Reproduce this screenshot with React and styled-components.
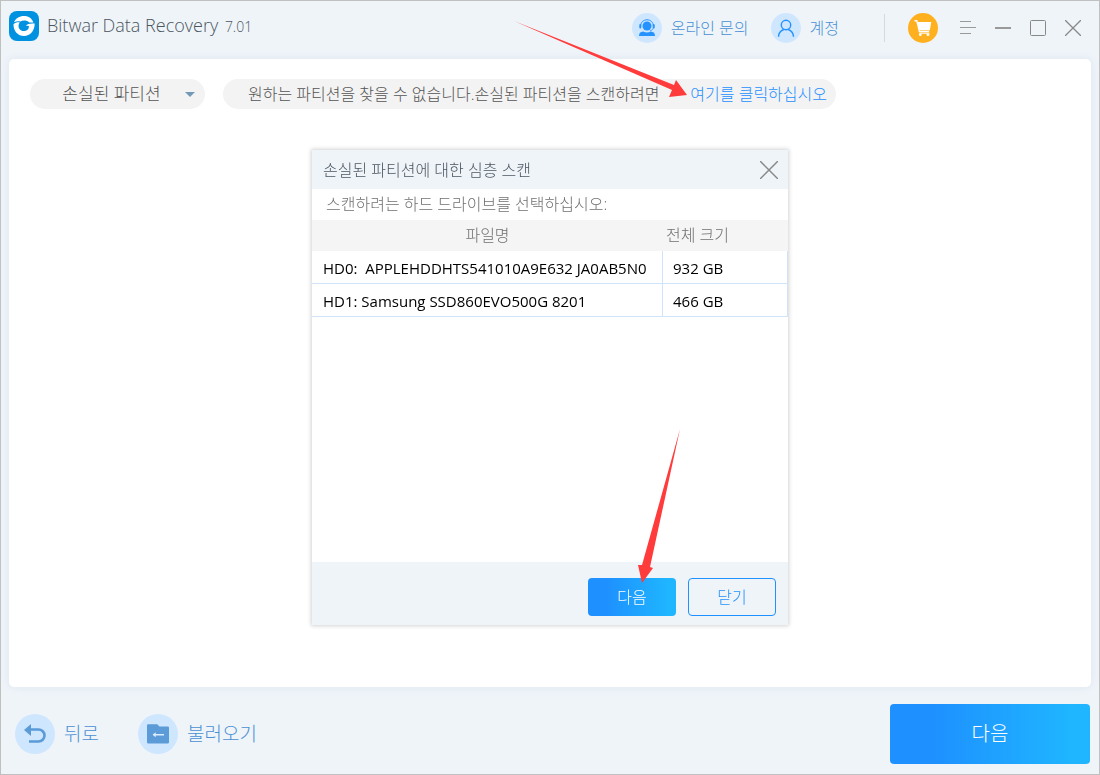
import React, { useState } from 'react';
import styled, { createGlobalStyle } from 'styled-components';

const GlobalStyle = createGlobalStyle`
  * {
    box-sizing: border-box;
  }

  body {
    margin: 0;
    background-color: #eff4f9;
    font-family: 'Open Sans', 'Noto Sans CJK KR', sans-serif;
    font-size: 16px;
    line-height: 24px;
    color: #555;
  }

  button,
  select {
    margin: 0;
    padding: 0;
    border: none;
    background: none;
    font: inherit;
    color: inherit;
    cursor: pointer;
  }
`;

const Window = styled.div`
  position: relative;
  display: flex;
  flex-direction: column;
  min-height: 100vh;
  border: 1px solid #c0c0c0;
  background-color: #eff4f9;
`;

const Header = styled.header`
  display: flex;
  align-items: center;
  justify-content: space-between;
  height: 54px;
  padding: 0 18px 0 8px;
`;

const Brand = styled.div`
  display: flex;
  align-items: center;
  gap: 8px;
  padding-bottom: 4px;
`;

const Title = styled.h1`
  margin: 0;
  font-size: 18px;
  font-weight: 300;
  color: #4c5660;
`;

const Version = styled.span`
  margin-left: 2px;
  font-size: 14px;
`;

const HeaderActions = styled.div`
  display: flex;
  align-items: center;
`;

const HeaderButton = styled.button`
  display: flex;
  align-items: center;
  gap: 9px;
  margin-right: 22px;
  font-weight: 300;
  color: #4a90d4;
`;

const Circle = styled.span`
  display: flex;
  align-items: center;
  justify-content: center;
  width: ${props => props.$size || 30}px;
  height: ${props => props.$size || 30}px;
  border-radius: 50%;
  background-color: ${props => props.$color || '#cfe6ff'};
`;

const Divider = styled.span`
  width: 1px;
  height: 28px;
  margin: 0 23px;
  background-color: #d6dade;
`;

const WindowControls = styled.div`
  display: flex;
  align-items: center;
  gap: 19px;
  margin-left: 22px;
`;

const IconButton = styled.button`
  display: flex;
  align-items: center;
`;

const Panel = styled.main`
  flex: 1;
  margin: 4px 8px 0;
  padding: 20px 21px;
  border-radius: 5px;
  background-color: #fff;
  box-shadow: 0 0 8px #dce5ed;
`;

const FilterRow = styled.div`
  display: flex;
  align-items: center;
  gap: 18px;
`;

const SelectBox = styled.div`
  position: relative;
  width: 175px;
`;

const PartitionSelect = styled.select`
  appearance: none;
  width: 100%;
  height: 30px;
  padding: 0 24px 0 12px;
  border-radius: 15px;
  background-color: #f3f3f3;
  font-size: 17px;
  font-weight: 300;
  text-align: center;
  text-align-last: center;
`;

const Caret = styled.span`
  position: absolute;
  top: 13px;
  right: 10px;
  border: 5px solid transparent;
  border-top-color: #7399b8;
  border-bottom: none;
  pointer-events: none;
`;

const Hint = styled.p`
  display: flex;
  align-items: center;
  justify-content: space-between;
  width: 613px;
  min-height: 30px;
  margin: 0;
  padding: 0 9px 0 25px;
  border-radius: 15px;
  background-color: #f3f3f3;
  font-weight: 300;
`;

const HintLink = styled.a`
  position: relative;
  padding-left: 3px;
  color: #1e90ff;
  text-decoration: none;
`;

const LinkPointer = styled.svg`
  position: absolute;
  right: 100%;
  bottom: 8px;
  pointer-events: none;
`;

const Footer = styled.footer`
  display: flex;
  align-items: center;
  justify-content: space-between;
  padding: 17px 9px 10px 14px;
`;

const FooterActions = styled.div`
  display: flex;
  gap: 39px;
`;

const FooterButton = styled.button`
  display: flex;
  align-items: center;
  gap: 9px;
  font-size: 19px;
  font-weight: 300;
  color: #4a90d4;
`;

const PrimaryButton = styled.button`
  position: relative;
  width: ${props => (props.$large ? 200 : 88)}px;
  height: ${props => (props.$large ? 60 : 38)}px;
  border-radius: 4px;
  background: linear-gradient(to right, #1e90ff 20%, #1fb5ff 90%);
  font-size: ${props => (props.$large ? 20 : 16)}px;
  font-weight: 300;
  color: #fff;
`;

const OutlineButton = styled.button`
  width: 88px;
  height: 38px;
  border: 1px solid #1e90ff;
  border-radius: 4px;
  font-weight: 300;
  color: #1e90ff;
`;

const DialogLayer = styled.div`
  position: fixed;
  inset: 0;
  display: flex;
  align-items: center;
  justify-content: center;
  pointer-events: none;
`;

const Dialog = styled.section`
  width: 476px;
  background-color: #fff;
  box-shadow: 0 0 4px 1px #d4d4d4;
  pointer-events: auto;
`;

const DialogHeader = styled.div`
  display: flex;
  align-items: center;
  justify-content: space-between;
  height: 39px;
  padding: 0 10px 0 11px;
  background-color: #eff4f9;
`;

const DialogTitle = styled.h2`
  margin: 0;
  font-size: 16px;
  font-weight: 300;
  color: #4c5660;
`;

const DialogText = styled.p`
  height: 31px;
  margin: 0;
  padding: 3px 14px;
  font-weight: 300;
  color: #707070;
`;

const TableArea = styled.div`
  min-height: 342px;
`;

const DriveTable = styled.table`
  width: 100%;
  border-collapse: separate;
  border-spacing: 0;
  table-layout: fixed;
`;

const HeadCell = styled.th`
  width: ${props => props.$width || 'auto'};
  height: 31px;
  padding: 0 3px 2px;
  background-color: #f5f5f5;
  font-weight: 300;
  text-align: ${props => props.$align || 'left'};
  color: #707070;
`;

const Cell = styled.td`
  height: 33px;
  padding: 2px 10px 0;
  border-right: 1px solid #cfe4fa;
  border-bottom: 1px solid #cfe4fa;
  font-size: 15px;
  line-height: 20px;
  color: #000;
  white-space: pre;

  &:first-child {
    padding-left: 11px;
  }
`;

const DialogFooter = styled.div`
  display: flex;
  align-items: center;
  justify-content: flex-end;
  gap: 12px;
  padding: 16px 12px 9px;
  background-color: #eff4f9;
`;

const ButtonPointer = styled.svg`
  position: absolute;
  bottom: 33px;
  left: 49px;
  pointer-events: none;
`;

const drives = [
  { name: 'HD0:  APPLEHDDHTS541010A9E632 JA0AB5N0', size: '932 GB' },
  { name: 'HD1: Samsung SSD860EVO500G 8201', size: '466 GB' },
];

const Logo = () => (
  <svg width="30" height="30" viewBox="0 0 30 30">
    <rect width="30" height="30" rx="8" fill="#0092e0" />
    <path
      d="M5 11.300C6.500 7.300 10.300 5 15 5c4.700 0 8.200 2.600 9.500 6.600-1.700-.3-3.100-.3-4.300 0C19 10.200 17.200 9.600 15 9.600c-1.400 0-2.500.3-3.500.9-2.300-.6-4.500-.3-6.500.8z"
      fill="#fff"
    />
    <path
      d="M4.500 13.200C6.400 11.500 8.600 11 10.700 11.400c-1.400 2-1.600 4.400-.4 6.300 2 3 6.800 3 8.900.2.600-.9.800-1.900.7-3l-3.200-.3c2-1.900 5-2.600 9-2C25.700 19.900 21.200 25 15 25 8.900 25 4.400 20 4.500 13.200z"
      fill="#fff"
    />
  </svg>
);

const SupportIcon = () => (
  <svg width="18" height="18" viewBox="0 0 18 18">
    <path d="M2.500 7C3 3 5.500.8 9 .8s6 2.200 6.500 6.200" fill="none" stroke="#2492ff" strokeWidth="1" />
    <circle cx="9" cy="7" r="4.500" fill="#2492ff" />
    <rect x="1.300" y="5" width="2" height="4.500" rx="1" fill="#2492ff" />
    <rect x="14.700" y="5" width="2" height="4.500" rx="1" fill="#2492ff" />
    <path d="M15.300 9c-.5 1.800-2 2.600-3.500 2.900" fill="none" stroke="#2492ff" strokeWidth="0.800" />
    <path d="M1 17c0-3 1.200-4.300 4.300-4.600 2 1.500 5.400 1.500 7.400 0 3.100.3 4.300 1.600 4.300 4.600z" fill="#2492ff" />
  </svg>
);

const UserIcon = () => (
  <svg width="18" height="18" viewBox="0 0 18 18" fill="none" stroke="#2492ff" strokeWidth="1.400">
    <circle cx="9" cy="6" r="4.700" />
    <path d="M1.500 17.700c.2-4 2.500-6.200 5.300-7.200M16.500 17.700c-.2-4-2.500-6.200-5.300-7.200" />
  </svg>
);

const CartIcon = () => (
  <svg width="18" height="18" viewBox="0 0 18 18">
    <path d="M.5 1.700h2.300l2.600 10.800h9.800" fill="none" stroke="#fff" strokeWidth="1.400" />
    <path d="M3.300 3h13.900l-1.300 8.300H5.300z" fill="#fff" />
    <path d="M5.300 14.200h10" stroke="#fff" strokeWidth="1" />
    <circle cx="6.300" cy="15.700" r="1.400" fill="#fff" />
    <circle cx="14" cy="15.700" r="1.400" fill="#fff" />
  </svg>
);

const MenuIcon = () => (
  <svg width="16" height="16" viewBox="0 0 16 16" stroke="#999" strokeWidth="1">
    <path d="M0 1.500h11M0 7.500h16M0 13.500h11" />
  </svg>
);

const MinimizeIcon = () => (
  <svg width="16" height="16" viewBox="0 0 16 16">
    <path d="M0 8h16" stroke="#999" strokeWidth="2" />
  </svg>
);

const MaximizeIcon = () => (
  <svg width="16" height="16" viewBox="0 0 16 16">
    <rect x="0.500" y="0.500" width="15" height="15" rx="1" fill="none" stroke="#888" />
  </svg>
);

const CloseIcon = ({ size = 16 }) => (
  <svg width={size} height={size} viewBox="0 0 16 16">
    <path d="M0 0l16 16M16 0L0 16" stroke="#888" strokeWidth="1.300" />
  </svg>
);

const BackIcon = () => (
  <svg width="22" height="20" viewBox="0 0 22 20">
    <path d="M0 6l7-6v12z" fill="#5a9bd8" />
    <path d="M5 5.500h9.500a5.800 5.800 0 0 1 0 12H5" fill="none" stroke="#5a9bd8" strokeWidth="2.600" />
  </svg>
);

const FolderIcon = () => (
  <svg width="22" height="20" viewBox="0 0 22 20">
    <path d="M0 1.500A1.200 1.200 0 0 1 1.200.3h9L12.500 2.500h8.300A1.200 1.200 0 0 1 22 3.700v14.600a1.200 1.200 0 0 1-1.200 1.200H1.200A1.200 1.200 0 0 1 0 18.300z" fill="#5a9bd8" />
    <path d="M5.500 10.700L8.700 8.200v1.800h8.300v1.400H8.700v1.800z" fill="#dcedff" />
  </svg>
);

function App() {
  const [partition, setPartition] = useState('lost');
  const [dialogOpen, setDialogOpen] = useState(true);

  return (
    <Window>
      <GlobalStyle />
      <Header>
        <Brand>
          <Logo />
          <Title>
            Bitwar Data Recovery <Version>7.01</Version>
          </Title>
        </Brand>
        <HeaderActions>
          <HeaderButton type="button">
            <Circle><SupportIcon /></Circle>
            온라인 문의
          </HeaderButton>
          <HeaderButton type="button">
            <Circle><UserIcon /></Circle>
            계정
          </HeaderButton>
          <Divider />
          <IconButton type="button" aria-label="구매">
            <Circle $color="#ffb01f"><CartIcon /></Circle>
          </IconButton>
          <WindowControls>
            <IconButton type="button" aria-label="메뉴"><MenuIcon /></IconButton>
            <IconButton type="button" aria-label="최소화"><MinimizeIcon /></IconButton>
            <IconButton type="button" aria-label="최대화"><MaximizeIcon /></IconButton>
            <IconButton type="button" aria-label="창 닫기"><CloseIcon /></IconButton>
          </WindowControls>
        </HeaderActions>
      </Header>

      <Panel>
        <FilterRow>
          <SelectBox>
            <PartitionSelect
              aria-label="파티션"
              value={partition}
              onChange={e => setPartition(e.target.value)}
            >
              <option value="lost">손실된 파티션</option>
            </PartitionSelect>
            <Caret />
          </SelectBox>
          <Hint>
            <span>원하는 파티션을 찾을 수 없습니다.손실된 파티션을 스캔하려면</span>
            <HintLink href="#scan" onClick={() => setDialogOpen(true)}>
              여기를 클릭하십시오
              <LinkPointer width="173" height="77" viewBox="0 0 173 77">
                <path d="M0 0L160 64L162 59L173 74L155 76L158 69Z" fill="#ff3b3b" />
              </LinkPointer>
            </HintLink>
          </Hint>
        </FilterRow>
      </Panel>

      <Footer>
        <FooterActions>
          <FooterButton type="button">
            <Circle $size={40}><BackIcon /></Circle>
            뒤로
          </FooterButton>
          <FooterButton type="button">
            <Circle $size={40}><FolderIcon /></Circle>
            불러오기
          </FooterButton>
        </FooterActions>
        <PrimaryButton type="button" $large>다음</PrimaryButton>
      </Footer>

      {dialogOpen && (
        <DialogLayer>
          <Dialog role="dialog" aria-labelledby="scan-title">
            <DialogHeader>
              <DialogTitle id="scan-title">손실된 파티션에 대한 심층 스캔</DialogTitle>
              <IconButton type="button" aria-label="대화 상자 닫기" onClick={() => setDialogOpen(false)}>
                <CloseIcon size={18} />
              </IconButton>
            </DialogHeader>
            <DialogText>스캔하려는 하드 드라이브를 선택하십시오:</DialogText>
            <TableArea>
              <DriveTable>
                <thead>
                  <tr>
                    <HeadCell $align="center">파일명</HeadCell>
                    <HeadCell $width="125px">전체 크기</HeadCell>
                  </tr>
                </thead>
                <tbody>
                  {drives.map(drive => (
                    <tr key={drive.name}>
                      <Cell>{drive.name}</Cell>
                      <Cell>{drive.size}</Cell>
                    </tr>
                  ))}
                </tbody>
              </DriveTable>
            </TableArea>
            <DialogFooter>
              <PrimaryButton type="button">
                다음
                <ButtonPointer width="43" height="154" viewBox="0 0 43 154">
                  <path d="M43 0L13 138L16 139L5 154L1 136L5 136Z" fill="#ff3b3b" />
                </ButtonPointer>
              </PrimaryButton>
              <OutlineButton type="button" onClick={() => setDialogOpen(false)}>닫기</OutlineButton>
            </DialogFooter>
          </Dialog>
        </DialogLayer>
      )}
    </Window>
  );
}

export default App;
